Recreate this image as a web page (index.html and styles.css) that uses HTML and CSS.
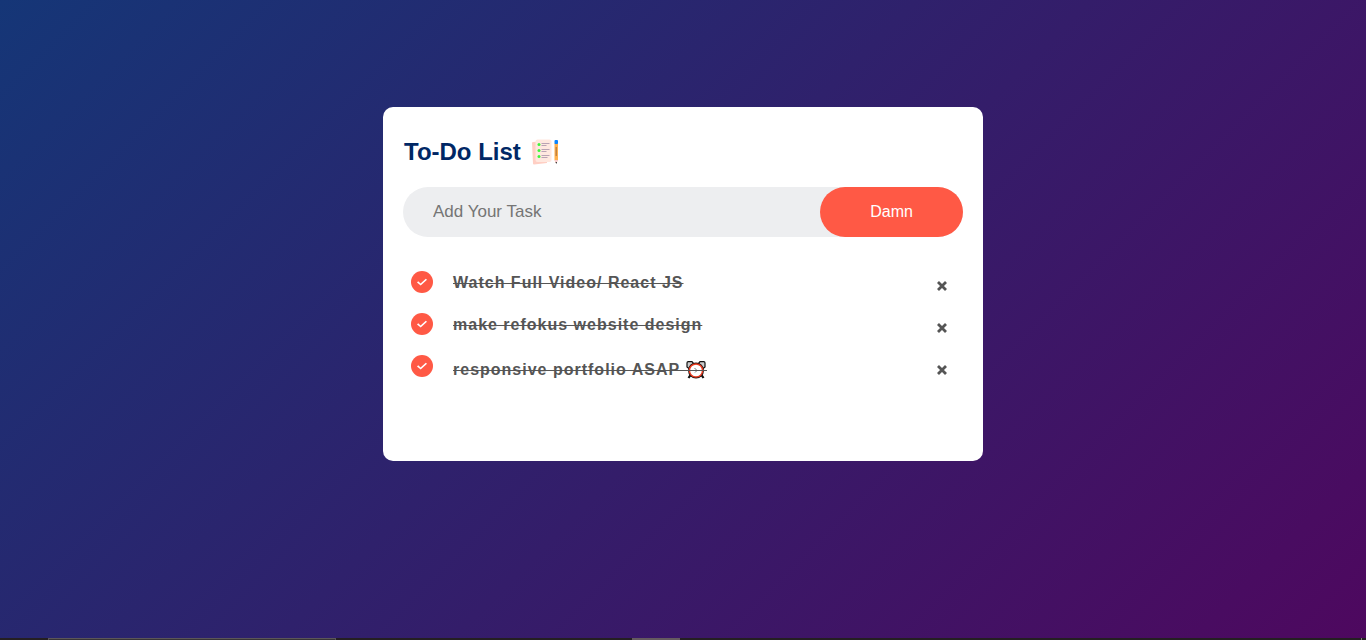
FILE: index.html
```html
<!DOCTYPE html>
<html lang="en">
<head>
<meta charset="utf-8">
<meta name="viewport" content="width=device-width, initial-scale=1">
<title>To-Do List</title>
<link rel="stylesheet" href="styles.css">
</head>
<body>
<main class="page">
  <section class="card">
    <h1 class="title">To-Do List
      <svg class="title-icon" viewBox="0 0 28 26" aria-hidden="true">
        <path d="M0 4Q0 3 1 3L15 2V24L2 25.500Q1 25.500 1 24.500Z" fill="#ffcfc4"/>
        <rect x="3.500" y="0.500" width="16" height="22.500" rx="2" fill="#ffe8df"/>
        <g fill="#3df53a"><circle cx="7" cy="5.500" r="1.500"/><circle cx="7" cy="11.500" r="1.500"/><circle cx="7" cy="17.500" r="1.500"/></g>
        <path d="M9.500 4.500H17.500M9.500 6.500H14.500M9.500 10.500H17.500M9.500 12.500H14.500M9.500 16.500H17.500M9.500 18.500H15.500" stroke="#b9a3b3"/>
        <path d="M22.500 4H26V21L24.200 24L22.500 21Z" fill="#ffb04d"/>
        <path d="M24.200 8V17" stroke="#a46d3c"/>
        <path d="M22.500 21H26L24.200 24.500Z" fill="#f8cbd0"/>
        <path d="M23.500 23H25L24.200 25Z" fill="#222"/>
        <rect x="22.500" y="1" width="3.500" height="4" rx="1" fill="#0a84ff"/>
      </svg>
    </h1>
    <form class="row">
      <input class="field" type="text" placeholder="Add Your Task" aria-label="Add Your Task">
      <button class="add" type="button">Damn</button>
    </form>
    <ul class="tasks">
      <li class="task">
        <input class="check" type="checkbox" id="t1" checked>
        <label class="text" for="t1">Watch Full Video/ React JS</label>
        <button class="remove" type="button" aria-label="Delete task"><svg class="cross" viewBox="0 0 12 10"><path d="M2 1L10 9M10 1L2 9"/></svg></button>
      </li>
      <li class="task">
        <input class="check" type="checkbox" id="t2" checked>
        <label class="text" for="t2">make refokus website design</label>
        <button class="remove" type="button" aria-label="Delete task"><svg class="cross" viewBox="0 0 12 10"><path d="M2 1L10 9M10 1L2 9"/></svg></button>
      </li>
      <li class="task">
        <input class="check" type="checkbox" id="t3" checked>
        <label class="text" for="t3">responsive portfolio ASAP <svg class="clock" viewBox="0 0 22 18" aria-hidden="true">
          <path d="M5.500 14L3.500 17M16.500 14L18.500 17" stroke="#111" stroke-width="2.200"/>
          <path d="M2 6V2Q2 .7 3.300 .7H7L9 3L4.500 8ZM20 6V2Q20 .7 18.700 .7H15L13 3L17.500 8Z" fill="#ccc" stroke="#111" stroke-width="1.200"/>
          <circle cx="11" cy="9.500" r="8" fill="#111"/>
          <circle cx="11" cy="9.500" r="6.600" fill="#fff" stroke="#e8391d" stroke-width="1.500"/>
          <path d="M9.500 7L12 9.500L10 11.500" fill="none" stroke="#777" stroke-width="1"/>
          <path d="M0 9.500H22" stroke="#555"/>
        </svg></label>
        <button class="remove" type="button" aria-label="Delete task"><svg class="cross" viewBox="0 0 12 10"><path d="M2 1L10 9M10 1L2 9"/></svg></button>
      </li>
    </ul>
  </section>
</main>
<footer class="taskbar" aria-hidden="true"><span class="search"></span><span class="active"></span><span class="edge"></span></footer>
</body>
</html>
```
FILE: styles.css
```css
* {
  box-sizing: border-box;
  margin: 0;
  padding: 0;
}

body {
  display: flex;
  flex-direction: column;
  min-height: 100vh;
  font-family: "Liberation Sans", Arial, sans-serif;
  background: linear-gradient(135deg, #153677, #4e085f);
}

.page {
  flex: 1;
  padding: 107px 20px 20px;
}

.card {
  max-width: 600px;
  margin: 0 auto;
  padding: 30px 20px 72px;
  border-radius: 10px;
  background: #fff;
}

.title {
  display: flex;
  align-items: center;
  gap: 11px;
  margin-bottom: 20px;
  padding-left: 1px;
  font-size: 24px;
  line-height: 30px;
  color: #002765;
}

.title-icon {
  width: 28px;
  height: 26px;
}

.row {
  display: flex;
  margin-bottom: 23px;
  border-radius: 30px;
  background: #edeef0;
}

.field {
  flex: 1;
  min-width: 0;
  padding-left: 30px;
  border: 0;
  outline: 0;
  background: transparent;
  font: 17px "Liberation Sans", Arial, sans-serif;
  color: #555;
}

.field::placeholder {
  color: #757575;
}

.add {
  height: 50px;
  padding: 0 50px;
  border: 0;
  border-radius: 40px;
  background: #ff5945;
  color: #fff;
  font: 16px "Liberation Sans", Arial, sans-serif;
  cursor: pointer;
}

.tasks {
  list-style: none;
}

.task {
  display: flex;
  align-items: flex-start;
  padding: 0 1px 0 8px;
}

.check {
  appearance: none;
  flex: none;
  display: grid;
  place-items: center;
  width: 22px;
  height: 22px;
  margin: 11px 20px 0 0;
  border-radius: 50%;
  background: #ff5945;
  cursor: pointer;
}

.check:checked::before {
  content: "";
  width: 10px;
  height: 8px;
  background: #fff;
  clip-path: polygon(0 55%, 12% 42%, 36% 68%, 88% 8%, 100% 22%, 37% 94%);
}

.text {
  flex: 1;
  padding: 14px 0 10px;
  font-size: 16px;
  font-weight: 700;
  line-height: 18px;
  letter-spacing: 1px;
  color: #555;
  cursor: pointer;
}

.check:checked + .text {
  text-decoration: line-through;
}

.clock {
  width: 22px;
  height: 18px;
  margin-top: 3px;
  vertical-align: -4px;
}

.remove {
  display: grid;
  place-items: center;
  width: 40px;
  height: 32px;
  margin-top: 10px;
  border: 0;
  background: transparent;
  cursor: pointer;
}

.cross {
  width: 12px;
  height: 10px;
  fill: none;
  stroke: #555;
  stroke-width: 2.8;
}

.taskbar {
  display: flex;
  height: 2px;
  padding-left: 48px;
  background: #241f22;
}

.search {
  width: 288px;
  margin-right: 296px;
  border: 1px solid #5b5659;
  border-bottom: 0;
  background: #383437;
}

.active {
  width: 48px;
  background: #655a60;
}

.edge {
  width: 1px;
  margin: 0 4px 0 auto;
  background: #817d78;
}
```
